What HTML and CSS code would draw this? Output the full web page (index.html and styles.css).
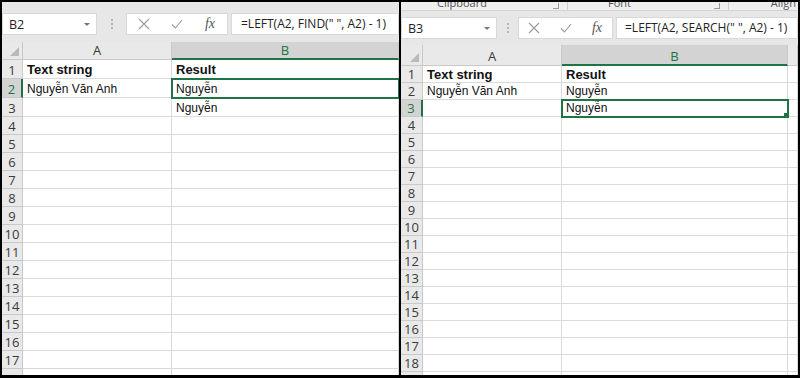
FILE: index.html
```html
<!DOCTYPE html>
<html lang="vi">
<head>
    <meta charset="UTF-8">
    <meta name="viewport" content="width=device-width, initial-scale=1.0">
    <title>LEFT + FIND / SEARCH</title>
    <link rel="stylesheet" href="styles.css">
</head>
<body>
<div class="screen">

    <!-- left: FIND -->
    <section class="panel panel-left">
        <div class="topstrip"></div>
        <div class="fbar">
            <div class="namebox"><span>B2</span><span class="caret"></span></div>
            <div class="grip"><i></i><i></i><i></i></div>
            <div class="fbtns">
                <svg width="12" height="12" viewBox="0 0 12 12"><path d="M1 1 L11 11 M11 1 L1 11" stroke="#9a9a9a" stroke-width="1.1" fill="none"/></svg>
                <svg width="12" height="10" viewBox="0 0 12 10"><path d="M1 5.5 L4.5 9 L11 1" stroke="#9a9a9a" stroke-width="1.1" fill="none"/></svg>
                <span class="fx">fx</span>
            </div>
            <div class="formula">=LEFT(A2, FIND(" ", A2) - 1)</div>
        </div>
        <div class="sheet">
            <div class="row head"><div class="corner"></div><div class="ch">A</div><div class="ch sel">B</div></div>
            <div class="row tall"><div class="rh">1</div><div class="c bold">Text string</div><div class="c bold">Result</div></div>
            <div class="row tall"><div class="rh sel">2</div><div class="c">Nguyễn Văn Anh</div><div class="c active">Nguyễn</div></div>
            <div class="row tall"><div class="rh">3</div><div class="c"></div><div class="c">Nguyễn</div></div>
            <div class="row"><div class="rh">4</div><div class="c"></div><div class="c"></div></div>
            <div class="row"><div class="rh">5</div><div class="c"></div><div class="c"></div></div>
            <div class="row"><div class="rh">6</div><div class="c"></div><div class="c"></div></div>
            <div class="row"><div class="rh">7</div><div class="c"></div><div class="c"></div></div>
            <div class="row"><div class="rh">8</div><div class="c"></div><div class="c"></div></div>
            <div class="row"><div class="rh">9</div><div class="c"></div><div class="c"></div></div>
            <div class="row"><div class="rh">10</div><div class="c"></div><div class="c"></div></div>
            <div class="row"><div class="rh">11</div><div class="c"></div><div class="c"></div></div>
            <div class="row"><div class="rh">12</div><div class="c"></div><div class="c"></div></div>
            <div class="row"><div class="rh">13</div><div class="c"></div><div class="c"></div></div>
            <div class="row"><div class="rh">14</div><div class="c"></div><div class="c"></div></div>
            <div class="row"><div class="rh">15</div><div class="c"></div><div class="c"></div></div>
            <div class="row"><div class="rh">16</div><div class="c"></div><div class="c"></div></div>
            <div class="row"><div class="rh">17</div><div class="c"></div><div class="c"></div></div>
            <div class="row"><div class="rh"></div><div class="c"></div><div class="c"></div></div>
        </div>
    </section>

    <!-- right: SEARCH -->
    <section class="panel panel-right">
        <div class="ribbon">
            <div class="group g-clip"><span>Clipboard</span><b class="launch"></b></div>
            <div class="group g-font"><span>Font</span><b class="launch"></b></div>
            <div class="group g-align"><span>Align</span></div>
        </div>
        <div class="fbar">
            <div class="namebox"><span>B3</span><span class="caret"></span></div>
            <div class="grip"><i></i><i></i><i></i></div>
            <div class="fbtns">
                <svg width="12" height="12" viewBox="0 0 12 12"><path d="M1 1 L11 11 M11 1 L1 11" stroke="#9a9a9a" stroke-width="1.1" fill="none"/></svg>
                <svg width="12" height="10" viewBox="0 0 12 10"><path d="M1 5.5 L4.5 9 L11 1" stroke="#9a9a9a" stroke-width="1.1" fill="none"/></svg>
                <span class="fx">fx</span>
            </div>
            <div class="formula">=LEFT(A2, SEARCH(" ", A2) - 1)</div>
        </div>
        <div class="sheet">
            <div class="row head"><div class="corner"></div><div class="ch">A</div><div class="ch sel">B</div><div class="ch"></div></div>
            <div class="row"><div class="rh">1</div><div class="c bold">Text string</div><div class="c bold">Result</div><div class="c"></div></div>
            <div class="row"><div class="rh">2</div><div class="c">Nguyễn Văn Anh</div><div class="c">Nguyễn</div><div class="c"></div></div>
            <div class="row"><div class="rh sel">3</div><div class="c"></div><div class="c active handle">Nguyễn</div><div class="c"></div></div>
            <div class="row"><div class="rh">4</div><div class="c"></div><div class="c"></div><div class="c"></div></div>
            <div class="row"><div class="rh">5</div><div class="c"></div><div class="c"></div><div class="c"></div></div>
            <div class="row"><div class="rh">6</div><div class="c"></div><div class="c"></div><div class="c"></div></div>
            <div class="row"><div class="rh">7</div><div class="c"></div><div class="c"></div><div class="c"></div></div>
            <div class="row"><div class="rh">8</div><div class="c"></div><div class="c"></div><div class="c"></div></div>
            <div class="row"><div class="rh">9</div><div class="c"></div><div class="c"></div><div class="c"></div></div>
            <div class="row"><div class="rh">10</div><div class="c"></div><div class="c"></div><div class="c"></div></div>
            <div class="row"><div class="rh">11</div><div class="c"></div><div class="c"></div><div class="c"></div></div>
            <div class="row"><div class="rh">12</div><div class="c"></div><div class="c"></div><div class="c"></div></div>
            <div class="row"><div class="rh">13</div><div class="c"></div><div class="c"></div><div class="c"></div></div>
            <div class="row"><div class="rh">14</div><div class="c"></div><div class="c"></div><div class="c"></div></div>
            <div class="row"><div class="rh">15</div><div class="c"></div><div class="c"></div><div class="c"></div></div>
            <div class="row"><div class="rh">16</div><div class="c"></div><div class="c"></div><div class="c"></div></div>
            <div class="row"><div class="rh">17</div><div class="c"></div><div class="c"></div><div class="c"></div></div>
            <div class="row"><div class="rh">18</div><div class="c"></div><div class="c"></div><div class="c"></div></div>
            <div class="row"><div class="rh"></div><div class="c"></div><div class="c"></div><div class="c"></div></div>
        </div>
    </section>

</div>
</body>
</html>
```

FILE: styles.css
```css
body{
    margin: 0;
    background: #000;
    font-family: "Liberation Sans", Arial, sans-serif;
}

.screen{
    display: flex;
    gap: 2px;
    height: 378px;
    padding: 2px 2px 3px 2px;
    box-sizing: border-box;
    background: #000;
}

.panel{
    flex: 1;
    display: flex;
    flex-direction: column;
    overflow: hidden;
    background: #e7e7e7;
}

/* top strips */
.topstrip{
    height: 11px;
}

.ribbon{
    height: 8px;
    display: flex;
    background: #efefef;
    border-bottom: 1px solid #d4d4d4;
    margin-bottom: 6px;
    overflow: hidden;
    font-family: "Open Sans", sans-serif;
    font-size: 11px;
    color: #555;
}
.ribbon .group{
    display: flex;
    line-height: 12px;
    margin-top: -5px;
    border-right: 1px solid #cfcfcf;
}
.g-clip{ width: 130px; padding-left: 36px; }
.g-font{ width: 160px; }
.g-align{ flex: 1; justify-content: flex-end; padding-right: 2px; border-right: none !important; }
.g-clip span{ flex: 1; }
.g-font span{ margin-left: 40px; flex: 1; }
.launch{
    width: 5px;
    height: 5px;
    margin: 6px 8px 0 0;
    border-right: 1px solid #999;
    border-bottom: 1px solid #999;
}

/* formula bar */
.fbar{
    height: 22px;
    display: flex;
    align-items: stretch;
}
.namebox,
.fbtns,
.formula{
    background: #fff;
    border: 1px solid #d9d9d9;
    box-sizing: border-box;
}
.namebox{
    width: 95px;
    display: flex;
    align-items: center;
    justify-content: space-between;
    padding: 0 6px;
    font-family: "Open Sans", sans-serif;
    font-size: 12.5px;
    color: #222;
}
.caret{
    width: 0;
    height: 0;
    border-left: 3px solid transparent;
    border-right: 3px solid transparent;
    border-top: 3px solid #777;
}
.grip{
    width: 29px;
    display: flex;
    flex-direction: column;
    align-items: center;
    justify-content: center;
    gap: 2px;
}
.grip i{
    width: 2px;
    height: 2px;
    background: #b5b5b5;
}
.fbtns{
    width: 102px;
    display: flex;
    align-items: center;
    justify-content: space-between;
    padding: 0 12px 0 11px;
}
.fx{
    font-family: "Liberation Serif", serif;
    font-style: italic;
    font-size: 14px;
    color: #555;
}
.formula{
    flex: 1;
    margin-left: 3px;
    padding-left: 9px;
    font-family: "Open Sans", sans-serif;
    font-size: 12px;
    line-height: 20px;
    color: #222;
    white-space: nowrap;
}

.panel-left .fbar{ margin-bottom: 7px; }
.panel-right .fbar{ margin-bottom: 6px; }
.panel-right .namebox{ width: 96px; }
.panel-right .grip{ width: 21px; }
.panel-right .fbtns{ width: 95px; padding: 0 10px 0 9px; }
.panel-right .formula{ padding-left: 8px; }

/* sheet grid */
.sheet{
    flex: 1;
    background: #fff;
    overflow: hidden;
}
.row{
    display: grid;
    height: 18px;
}
.panel-left .row{ grid-template-columns: 21px 149px 1fr; }
.panel-left .row.tall{ height: 19px; }
.panel-right .row{ grid-template-columns: 22px 139px 226px 1fr; height: 17px; }
.panel-right .row.head{ height: 21px; }

.row > div{
    box-sizing: border-box;
    border-right: 1px solid #dadada;
    border-bottom: 1px solid #dadada;
    overflow: hidden;
    white-space: nowrap;
}

.corner,
.ch,
.rh{
    background: #e9e9e9;
    border-color: #c9c9c9 !important;
    color: #3a3a3a;
    font-family: "Open Sans", sans-serif;
    font-size: 13px;
}
.corner{
    position: relative;
}
.corner::after{
    content: "";
    position: absolute;
    right: 3px;
    bottom: 3px;
    border-left: 9px solid transparent;
    border-bottom: 9px solid #b9b9b9;
}
.ch{
    text-align: center;
    line-height: 17px;
}
.panel-right .ch{ line-height: 22px; }
.rh{
    text-align: center;
    line-height: 19px;
}
.panel-left .tall .rh{ line-height: 20px; }
.panel-right .rh{ line-height: 17px; }

.ch.sel{
    background: #d3d3d3;
    color: #217346;
    border-bottom: 2px solid #217346 !important;
}
.rh.sel{
    background: #d3d3d3;
    color: #217346;
    border-right: 2px solid #217346 !important;
}

.c{
    padding-left: 4px;
    font-size: 12px;
    line-height: 19px;
    color: #111;
}
.panel-left .tall .c{ line-height: 20px; }
.panel-right .c{ line-height: 17px; }
.c.bold{
    font-weight: bold;
    font-size: 13px;
}

.c.active{
    position: relative;
    outline: 2px solid #217346;
    outline-offset: -1px;
    z-index: 1;
}
.c.handle::after{
    content: "";
    position: absolute;
    right: -3px;
    bottom: -3px;
    width: 5px;
    height: 5px;
    background: #217346;
    border: 1px solid #fff;
}
```
